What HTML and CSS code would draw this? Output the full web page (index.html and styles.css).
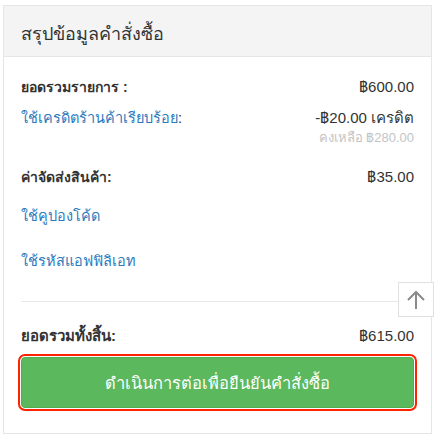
FILE: index.html
```html
<!DOCTYPE html>
<html lang="th">
<head>
  <meta charset="UTF-8" />
  <meta name="viewport" content="width=device-width, initial-scale=1.0"/>
  <title>สรุปข้อมูลคำสั่งซื้อ</title>
  <link rel="stylesheet" href="styles.css">
</head>
<body>
  <div class="card">
    <div class="card-header">
      <h3>สรุปข้อมูลคำสั่งซื้อ</h3>
    </div>
    <div class="card-body">
      <div class="row">
        <span class="label">ยอดรวมรายการ :</span>
        <span class="value">฿600.00</span>
      </div>
      <div class="row credit">
        <a class="link" href="#">ใช้เครดิตร้านค้าเรียบร้อย<span class="colon">:</span></a>
        <div class="value-stack">
          <span class="value">-฿20.00 เครดิต</span>
          <span class="note">คงเหลือ ฿280.00</span>
        </div>
      </div>
      <div class="row">
        <span class="label">ค่าจัดส่งสินค้า:</span>
        <span class="value">฿35.00</span>
      </div>
      <div class="row">
        <a class="link" href="#">ใช้คูปองโค้ด</a>
      </div>
      <div class="row affiliate">
        <a class="link" href="#">ใช้รหัสแอฟฟิลิเอท</a>
      </div>
      <hr class="divider">
      <div class="row total">
        <span class="label">ยอดรวมทั้งสิ้น:</span>
        <span class="value">฿615.00</span>
      </div>
      <button class="checkout">ดำเนินการต่อเพื่อยืนยันคำสั่งซื้อ</button>
    </div>
    <a class="to-top" href="#" title="กลับด้านบน">
      <svg width="22" height="22" viewBox="0 0 22 22" fill="none" stroke="#8a8a8a" stroke-width="2">
        <path d="M11 20V3M3 11l8-8 8 8"/>
      </svg>
    </a>
  </div>
</body>
</html>
```

FILE: styles.css
```css
body {
  margin: 0;
  background: #fff;
  font-family: "Liberation Sans", "Noto Sans", sans-serif;
  color: #333;
}
.card {
  position: relative;
  margin: 5px 5px 4px 3px;
  border: 1px solid #e6e6e6;
}
.card-header {
  height: 51px;
  box-sizing: border-box;
  padding: 4px 0 0 17px;
  background: #f4f4f4;
  border-bottom: 1px solid #e6e6e6;
  display: flex;
  align-items: center;
}
.card-header h3 {
  margin: 0;
  font-size: 18px;
  font-weight: normal;
  color: #333;
}
.card-body {
  padding: 20px 17px 25px 17px;
}
.row {
  display: flex;
  justify-content: space-between;
  align-items: flex-start;
  line-height: 20px;
  margin-top: 19px;
}
.row:first-child {
  margin-top: 0;
}
.credit {
  margin-top: 11px;
}
.affiliate {
  margin-top: 25px;
}
.label {
  font-size: 14px;
  font-weight: bold;
  color: #333;
}
.value {
  font-size: 15px;
  color: #333;
}
.link {
  font-size: 14.5px;
  color: #2b7bbd;
  text-decoration: none;
}
.colon {
  color: #333;
}
.value-stack {
  display: flex;
  flex-direction: column;
  align-items: flex-end;
}
.note {
  font-size: 13px;
  line-height: 20px;
  color: #c4c4c4;
}
.divider {
  border: 0;
  border-top: 1px solid #e8e8e8;
  margin: 30px 0 24px;
}
.total {
  margin-top: 0;
}
.total .label {
  font-size: 15px;
}
.checkout {
  display: block;
  width: 100%;
  height: 51px;
  margin-top: 11px;
  border: 1px solid #4cae4c;
  border-radius: 4px;
  background: #5cb85c;
  color: #fff;
  font-family: inherit;
  font-size: 16.5px;
  outline: 2px solid #ff2200;
  outline-offset: 1px;
}
.to-top {
  position: absolute;
  left: 394px;
  top: 276px;
  width: 34px;
  height: 33px;
  border: 1px solid #e0e0e0;
  background: #fff;
  display: flex;
  align-items: center;
  justify-content: center;
}
```
